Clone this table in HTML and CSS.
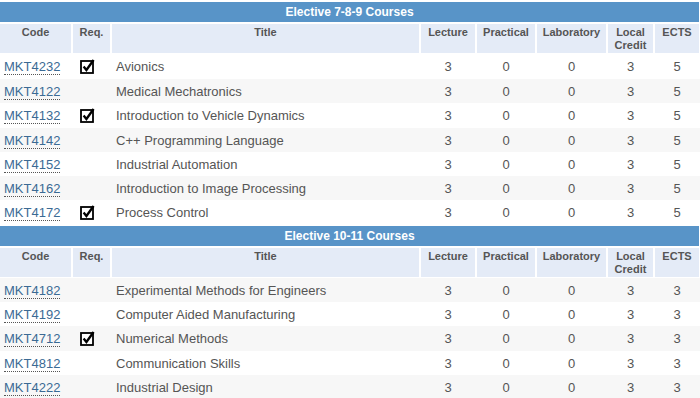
FILE: index.html
```html
<!DOCTYPE html>
<html>
<head>
<meta charset="utf-8">
<link rel="stylesheet" href="styles.css">
</head>
<body>
<table class="courses">
  <colgroup>
    <col class="c-code"><col class="c-req"><col class="c-title"><col class="c-lec"><col class="c-prac"><col class="c-lab"><col class="c-local"><col class="c-ects">
  </colgroup>
  <tbody>
    <tr class="cap"><th colspan="8">Elective 7-8-9 Courses</th></tr>
    <tr class="head"><th>Code</th><th>Req.</th><th>Title</th><th>Lecture</th><th>Practical</th><th>Laboratory</th><th>Local<br>Credit</th><th>ECTS</th></tr>
    <tr class="row tall"><td class="code"><a>MKT4232</a></td><td class="req"><svg class="chk" width="15" height="15" viewBox="0 0 15 15"><rect x="1" y="2" width="12" height="12" fill="#fff" stroke="#000" stroke-width="1.8"/><path d="M3.6 7.6 L6.4 11 L13.6 1" fill="none" stroke="#000" stroke-width="2.3"/></svg></td><td class="title">Avionics</td><td>3</td><td>0</td><td>0</td><td>3</td><td>5</td></tr>
    <tr class="row"><td class="code"><a>MKT4122</a></td><td class="req"></td><td class="title">Medical Mechatronics</td><td>3</td><td>0</td><td>0</td><td>3</td><td>5</td></tr>
    <tr class="row tall"><td class="code"><a>MKT4132</a></td><td class="req"><svg class="chk" width="15" height="15" viewBox="0 0 15 15"><rect x="1" y="2" width="12" height="12" fill="#fff" stroke="#000" stroke-width="1.8"/><path d="M3.6 7.6 L6.4 11 L13.6 1" fill="none" stroke="#000" stroke-width="2.3"/></svg></td><td class="title">Introduction to Vehicle Dynamics</td><td>3</td><td>0</td><td>0</td><td>3</td><td>5</td></tr>
    <tr class="row"><td class="code"><a>MKT4142</a></td><td class="req"></td><td class="title">C++ Programming Language</td><td>3</td><td>0</td><td>0</td><td>3</td><td>5</td></tr>
    <tr class="row"><td class="code"><a>MKT4152</a></td><td class="req"></td><td class="title">Industrial Automation</td><td>3</td><td>0</td><td>0</td><td>3</td><td>5</td></tr>
    <tr class="row"><td class="code"><a>MKT4162</a></td><td class="req"></td><td class="title">Introduction to Image Processing</td><td>3</td><td>0</td><td>0</td><td>3</td><td>5</td></tr>
    <tr class="row tall"><td class="code"><a>MKT4172</a></td><td class="req"><svg class="chk" width="15" height="15" viewBox="0 0 15 15"><rect x="1" y="2" width="12" height="12" fill="#fff" stroke="#000" stroke-width="1.8"/><path d="M3.6 7.6 L6.4 11 L13.6 1" fill="none" stroke="#000" stroke-width="2.3"/></svg></td><td class="title">Process Control</td><td>3</td><td>0</td><td>0</td><td>3</td><td>5</td></tr>
    <tr class="cap"><th colspan="8">Elective 10-11 Courses</th></tr>
    <tr class="head"><th>Code</th><th>Req.</th><th>Title</th><th>Lecture</th><th>Practical</th><th>Laboratory</th><th>Local<br>Credit</th><th>ECTS</th></tr>
    <tr class="row"><td class="code"><a>MKT4182</a></td><td class="req"></td><td class="title">Experimental Methods for Engineers</td><td>3</td><td>0</td><td>0</td><td>3</td><td>3</td></tr>
    <tr class="row"><td class="code"><a>MKT4192</a></td><td class="req"></td><td class="title">Computer Aided Manufacturing</td><td>3</td><td>0</td><td>0</td><td>3</td><td>3</td></tr>
    <tr class="row tall"><td class="code"><a>MKT4712</a></td><td class="req"><svg class="chk" width="15" height="15" viewBox="0 0 15 15"><rect x="1" y="2" width="12" height="12" fill="#fff" stroke="#000" stroke-width="1.8"/><path d="M3.6 7.6 L6.4 11 L13.6 1" fill="none" stroke="#000" stroke-width="2.3"/></svg></td><td class="title">Numerical Methods</td><td>3</td><td>0</td><td>0</td><td>3</td><td>3</td></tr>
    <tr class="row"><td class="code"><a>MKT4812</a></td><td class="req"></td><td class="title">Communication Skills</td><td>3</td><td>0</td><td>0</td><td>3</td><td>3</td></tr>
    <tr class="row"><td class="code"><a>MKT4222</a></td><td class="req"></td><td class="title">Industrial Design</td><td>3</td><td>0</td><td>0</td><td>3</td><td>3</td></tr>
  </tbody>
</table>
</body>
</html>
```

FILE: styles.css
```css
html, body {
  margin: 0;
  padding: 0;
  background: #fff;
}
body {
  font-family: "Liberation Sans", Arial, sans-serif;
  overflow: hidden;
}
.courses {
  table-layout: fixed;
  border-collapse: separate;
  border-spacing: 0;
  width: 701px;
  margin: 1px 0 0 -1px;
  font-size: 13px;
  color: #555;
}
.c-code { width: 73px; }
.c-req { width: 39px; }
.c-title { width: 309px; }
.c-lec { width: 56px; }
.c-prac { width: 60px; }
.c-lab { width: 71px; }
.c-local { width: 47px; }
.c-ects { width: 46px; }

.cap th {
  background: #5894c8;
  color: #fff;
  font-weight: bold;
  font-size: 12px;
  height: 20px;
  padding: 0;
  border: 1px solid #fff;
  text-align: center;
  vertical-align: middle;
  line-height: 20px;
}
.head th {
  background: #e4ebf7;
  color: #555;
  font-weight: bold;
  font-size: 11px;
  line-height: 13px;
  height: 31px;
  padding: 2px 0 0 0;
  box-sizing: border-box;
  border: 1px solid #fff;
  text-align: center;
  vertical-align: top;
}
.row td {
  height: 24px;
  padding: 0;
  text-align: center;
  vertical-align: middle;
  line-height: 15px;
}
.row.tall td {
  height: 25px;
}
.courses tr:nth-child(even) td {
  background: #f7f7f7;
}
.row td.code {
  text-align: left;
  padding-left: 5px;
}
.code a {
  color: #3b6a94;
  text-decoration: none;
  border-bottom: 1px dotted #555;
}
.row td.req {
  text-align: left;
  padding-left: 8px;
}
.chk {
  display: block;
}
.row td.title {
  text-align: left;
  padding-left: 5px;
}
```
